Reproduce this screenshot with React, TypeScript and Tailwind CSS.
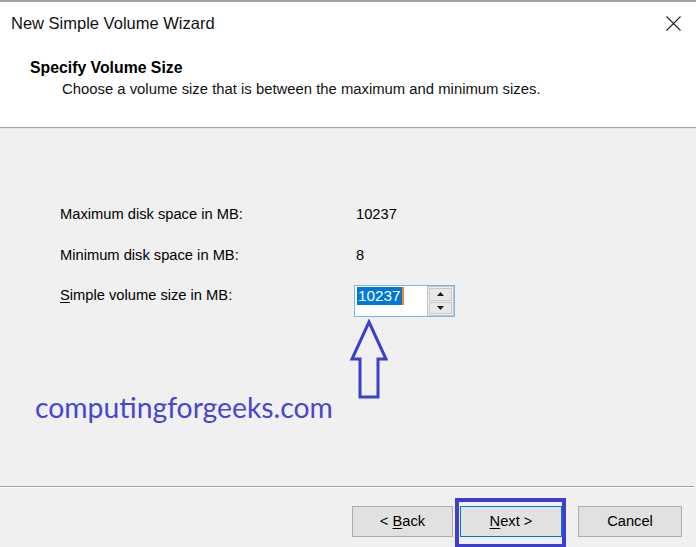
import { ReactNode } from "react"

const ui = { fontFamily: '"Liberation Sans", Arial, sans-serif' }

function Row({ label, children }: { label: ReactNode; children: ReactNode }) {
  return (
    <div className="flex items-start">
      <div className="w-[296px] pl-[60px] text-[14.7px] leading-[20px]">{label}</div>
      <div className="text-[14.7px] leading-[20px]">{children}</div>
    </div>
  )
}

function Spinner() {
  return (
    <div className="flex h-[32px] w-[101px] border border-[#7eb4ea] bg-white">
      <div className="flex flex-1 items-start pl-[2px] pt-[1px]">
        <span className="bg-[#0078d7] px-[1px] text-[15.3px] leading-[18px] text-white">10237</span>
        <span className="h-[18px] w-[2px] bg-[#f08a24]" />
      </div>
      <div className="flex w-[27px] flex-col gap-[1px] border border-[#c3c3c3] bg-[#f0f0f0] p-[1px]">
        <button className="flex flex-1 items-center justify-center border border-[#c8c8c8] bg-[#e8e8e8]">
          <svg width="7" height="4" viewBox="0 0 7 4">
            <path d="M0 4 L3.5 0 L7 4 Z" fill="#1a1a1a" />
          </svg>
        </button>
        <button className="flex flex-1 items-center justify-center border border-[#c8c8c8] bg-[#e8e8e8]">
          <svg width="7" height="4" viewBox="0 0 7 4">
            <path d="M0 0 L3.5 4 L7 0 Z" fill="#1a1a1a" />
          </svg>
        </button>
      </div>
    </div>
  )
}

function WizButton({ children, focused, width }: { children: ReactNode; focused?: boolean; width: string }) {
  return (
    <button
      className={`${width} h-[31px] border bg-[#e1e1e1] text-[14.7px] leading-none text-black ${
        focused ? "border-[#0078d7]" : "border-[#adadad]"
      }`}
    >
      {children}
    </button>
  )
}

export default function App() {
  return (
    <div className="flex h-[547px] w-[696px] flex-col overflow-hidden bg-[#f0f0f0] text-black" style={ui}>
      {/* Header */}
      <div className="h-[127px] border-t-2 border-[#a3a3a3] bg-white">
        <div className="flex items-start justify-between pt-[11px]">
          <div className="pl-[11px] text-[16.5px] leading-[20px] text-[#111]">New Simple Volume Wizard</div>
          <svg className="mr-[15px] mt-[3px]" width="15" height="15" viewBox="0 0 15 15">
            <path d="M0.5 0.5 L14.5 14.5 M14.5 0.5 L0.5 14.5" stroke="#222" strokeWidth="1.1" />
          </svg>
        </div>
        <div className="pl-[30px] pt-[25px] text-[15.8px] font-bold leading-[20px]">Specify Volume Size</div>
        <div className="pl-[62px] pt-px text-[14.85px] leading-[20px] text-[#111]">
          Choose a volume size that is between the maximum and minimum sizes.
        </div>
      </div>
      <div className="h-px bg-[#a0a0a0]" />
      <div className="h-px bg-[#e6e6e6]" />

      {/* Body */}
      <div className="relative flex-1 pt-[75px]">
        <div className="flex flex-col">
          <Row label="Maximum disk space in MB:">
            <span className="pl-[60px]">10237</span>
          </Row>
          <div className="mt-[21px]">
            <Row label="Minimum disk space in MB:">
              <span className="pl-[60px]">8</span>
            </Row>
          </div>
          <div className="mt-[20px] flex items-start">
            <div className="w-[354px] pl-[60px] text-[14.7px] leading-[20px]">
              <span className="underline underline-offset-2">S</span>imple volume size in MB:
            </div>
            <Spinner />
          </div>
        </div>

        <div
          className="mt-[74px] pl-[35px] text-[28.3px] leading-[32px] text-[#4646d0]"
          style={{ fontFamily: 'Lato, "Open Sans", sans-serif' }}
        >
          computingforgeeks.com
        </div>

        {/* up arrow pointing at the size field */}
        <svg className="absolute left-[349px] top-[190px]" width="40" height="82" viewBox="0 0 40 82">
          <path
            d="M20 3 L37 40 L29 40 L29 78 L11 78 L11 40 L3 40 Z"
            fill="none"
            stroke="#3b3fcc"
            strokeWidth="3"
            strokeLinejoin="miter"
          />
        </svg>
      </div>

      <div className="mr-[2px] h-px bg-[#a0a0a0]" />
      <div className="mr-[2px] h-px bg-white" />

      {/* Footer */}
      <div className="relative flex h-[59px] items-start justify-end pr-[14px] pt-[18px]">
        <WizButton width="w-[101px]">
          &lt; <span className="underline underline-offset-2">B</span>ack
        </WizButton>
        <div className="ml-[7px]">
          <WizButton width="w-[102px]" focused>
            <span className="underline underline-offset-2">N</span>ext &gt;
          </WizButton>
        </div>
        <div className="ml-[16px]">
          <WizButton width="w-[104px]">Cancel</WizButton>
        </div>
        <div className="absolute left-[455px] top-[10px] h-[50px] w-[111px] border-4 border-[#3f3fcf]" />
      </div>
    </div>
  )
}
